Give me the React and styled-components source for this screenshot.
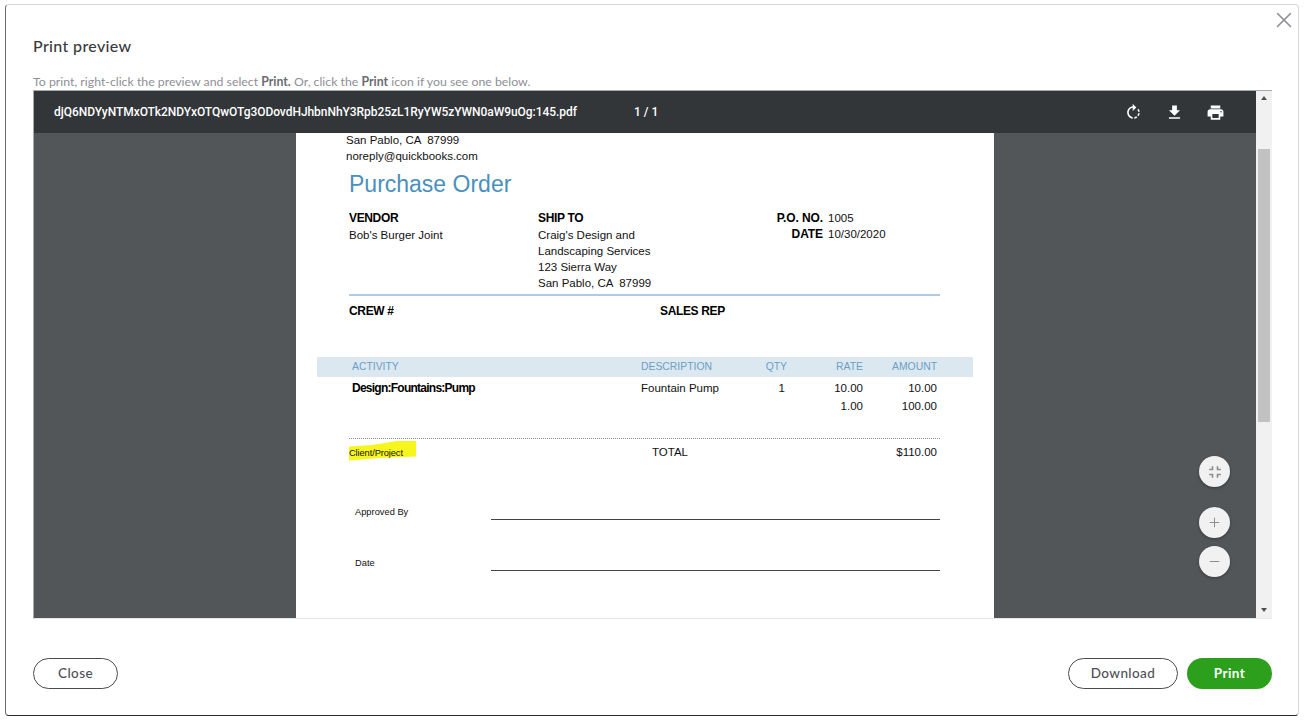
import React from 'react'
import styled, { createGlobalStyle } from 'styled-components'
import { X, Plus, Minus } from 'lucide-react'
import { MdRotateRight, MdFileDownload, MdPrint, MdFullscreenExit } from 'react-icons/md'

const GlobalStyle = createGlobalStyle`
  html, body {
    margin: 0;
    padding: 0;
    background: #fff;
  }
`

const Dialog = styled.div`
  position: relative;
  box-sizing: border-box;
  width: 1294px;
  height: 712px;
  margin: 4px 0 0 5px;
  padding: 0 26px 0 27px;
  display: flex;
  flex-direction: column;
  background: #fff;
  border: 1px solid #d4d7dc;
  border-left-color: #6b6c6e;
  border-bottom-color: #2b2c2e;
  border-radius: 4px;
  font-family: Lato, "Noto Sans", sans-serif;
`

const CloseIcon = styled.button`
  position: absolute;
  top: 2px;
  right: 1px;
  padding: 0;
  border: 0;
  background: none;
  color: #8d9096;
  display: flex;
`

const Title = styled.h1`
  margin: 30px 0 0;
  height: 21px;
  font-size: 16px;
  line-height: 21px;
  font-weight: 500;
  letter-spacing: 0.35px;
  color: #393a3d;
`

const Hint = styled.p`
  margin: 18px 0 0;
  height: 16px;
  font-size: 12.3px;
  line-height: 16px;
  color: #8d9096;
  b {
    font-weight: 700;
    color: #6b6c72;
  }
`

const Viewer = styled.div`
  box-sizing: border-box;
  height: 529px;
  display: grid;
  grid-template-columns: 1fr 16px;
  border-top: 1px solid #a8a9ab;
  border-bottom: 1px solid #e6e7e8;
  border-left: 1px solid #a8a9ab;
`

const ViewerMain = styled.div`
  min-width: 0;
  display: flex;
  flex-direction: column;
  background: #525659;
`

const Toolbar = styled.div`
  height: 42px;
  flex: none;
  display: flex;
  align-items: center;
  padding-left: 20px;
  background: #323639;
  color: #fff;
  font-family: Roboto, sans-serif;
  font-size: 12px;
  font-weight: 500;
`

const FileName = styled.span`
  width: 580px;
  letter-spacing: -0.05px;
`

const PageCount = styled.span`
  letter-spacing: 0;
`

const ToolIcons = styled.div`
  margin-left: auto;
  margin-right: 31px;
  display: flex;
  gap: 22px;
  font-size: 19px;
  svg {
    display: block;
  }
`

const Canvas = styled.div`
  position: relative;
  flex: 1;
  min-height: 0;
  overflow: hidden;
`

const Paper = styled.div`
  box-sizing: border-box;
  width: 698px;
  height: 100%;
  margin: 0 0 0 262px;
  padding-left: 53px;
  background: #fff;
  color: #111;
  font-family: "Liberation Sans", Arial, sans-serif;
  font-size: 11.5px;
  overflow: hidden;
`

const Sender = styled.div`
  margin: -1px 0 0 -3px;
  line-height: 16px;
  white-space: pre;
`

const DocTitle = styled.h2`
  margin: 5px 0 0;
  font-size: 23px;
  line-height: 30px;
  font-weight: 400;
  color: #4a90bd;
`

const Label = styled.div`
  font-size: 12px;
  font-weight: 700;
  letter-spacing: -0.35px;
  color: #000;
`

const InfoGrid = styled.div`
  box-sizing: border-box;
  width: 591px;
  margin-top: 11px;
  padding-bottom: 3px;
  display: grid;
  grid-template-columns: 189px 200px 1fr;
  line-height: 16px;
  white-space: pre;
  border-bottom: 2px solid #b0cbe1;
`

const InfoValue = styled.div`
  margin-top: 1px;
`

const MetaGrid = styled.div`
  display: grid;
  grid-template-columns: 85px auto;
  column-gap: 5px;
  justify-content: start;
  height: 32px;
  ${Label} {
    text-align: right;
    letter-spacing: -0.1px;
  }
`

const RepRow = styled.div`
  margin-top: 7px;
  height: 54px;
  display: grid;
  grid-template-columns: 311px 1fr;
  line-height: 16px;
`

const LineTable = styled.div`
  margin: 0 0 0 -32px;
  width: 656px;
`

const LineRow = styled.div`
  box-sizing: border-box;
  padding: 0 36px 0 35px;
  display: grid;
  grid-template-columns: 289px 110px 36px 76px 74px;
  height: ${p => (p.$head ? '20px' : '18px')};
  line-height: ${p => (p.$head ? '19px' : '18px')};
  font-size: ${p => (p.$head ? '10.4px' : '11.5px')};
  color: ${p => (p.$head ? '#6a9fc6' : '#111')};
  background: ${p => (p.$head ? '#dce8f0' : 'transparent')};
  margin-top: ${p => (p.$first ? '2px' : '0')};
`

const Num = styled.span`
  text-align: right;
  padding-right: ${p => p.$pad || 0}px;
`

const ActivityName = styled.span`
  font-size: 12px;
  font-weight: 700;
  letter-spacing: -0.75px;
  color: #000;
`

const TotalRow = styled.div`
  box-sizing: border-box;
  width: 591px;
  margin-top: 23px;
  height: 26px;
  padding-top: 1px;
  display: grid;
  grid-template-columns: 303px 1fr auto;
  align-items: center;
  border-top: 1px dotted #8e8f91;
  padding-right: 3px;
`

const Highlight = styled.span`
  box-sizing: border-box;
  width: 67px;
  height: 20px;
  margin-top: -3px;
  display: flex;
  align-items: flex-end;
  padding-bottom: 1px;
  font-size: 9.3px;
  line-height: 14px;
  letter-spacing: -0.1px;
  background: #f6f61c;
  clip-path: polygon(0 30%, 35% 22%, 75% 0, 100% 0, 100% 80%, 45% 88%, 0 100%);
`

const SignRow = styled.div`
  margin-top: ${p => p.$gap}px;
  width: 591px;
  height: 12px;
  display: grid;
  grid-template-columns: 142px 1fr;
  font-size: 9.3px;
`

const SignName = styled.span`
  padding-left: 6px;
  line-height: 9px;
`

const SignLine = styled.span`
  display: block;
  height: 11px;
  border-bottom: 1px solid #444;
`

const ZoomControls = styled.div`
  position: absolute;
  right: 26px;
  bottom: 41px;
  display: flex;
  flex-direction: column;
  gap: 8px;
`

const ZoomButton = styled.button`
  width: 31px;
  height: 31px;
  margin-bottom: ${p => (p.$apart ? '12px' : '0')};
  padding: 0;
  display: flex;
  align-items: center;
  justify-content: center;
  border: 0;
  border-radius: 50%;
  background: #f1f1f1;
  color: #8d8e90;
  box-shadow: 0 1px 3px rgba(0, 0, 0, 0.35);
`

const ScrollBar = styled.div`
  display: flex;
  flex-direction: column;
  align-items: center;
  background: #f1f1f1;
  padding-top: 5px;
`

const Arrow = styled.span`
  width: 0;
  height: 0;
  border-left: 3.5px solid transparent;
  border-right: 3.5px solid transparent;
  ${p => (p.$down
    ? 'border-top: 4px solid #505050; margin-top: auto; margin-bottom: 6px;'
    : 'border-bottom: 4px solid #505050;')}
`

const Thumb = styled.div`
  width: 12px;
  height: 273px;
  margin-top: 49px;
  background: #c1c1c1;
`

const Footer = styled.div`
  margin-top: 39px;
  display: flex;
  align-items: center;
  gap: 9px;
`

const PillButton = styled.button`
  box-sizing: border-box;
  width: ${p => p.$w}px;
  height: 31px;
  padding: 0 0 1px;
  border-radius: 16px;
  border: ${p => (p.$primary ? '0' : '1.5px solid #4a4b4f')};
  background: ${p => (p.$primary ? '#2ca01c' : '#fff')};
  color: ${p => (p.$primary ? '#fff' : '#4f5055')};
  font-family: Lato, "Noto Sans", sans-serif;
  font-size: 13.5px;
  font-weight: ${p => (p.$primary ? 700 : 500)};
  letter-spacing: 0.4px;
  margin-left: ${p => (p.$push ? 'auto' : '0')};
`

const App = () => {
  return (
    <>
      <GlobalStyle />
      <Dialog>
        <CloseIcon aria-label="Close"><X size={26} strokeWidth={1.5} /></CloseIcon>
        <Title>Print preview</Title>
        <Hint>To print, right-click the preview and select <b>Print.</b> Or, click the <b>Print</b> icon if you see one below.</Hint>
        <Viewer>
          <ViewerMain>
            <Toolbar>
              <FileName>djQ6NDYyNTMxOTk2NDYxOTQwOTg3ODovdHJhbnNhY3Rpb25zL1RyYW5zYWN0aW9uOg:145.pdf</FileName>
              <PageCount>1 / 1</PageCount>
              <ToolIcons>
                <MdRotateRight />
                <MdFileDownload />
                <MdPrint />
              </ToolIcons>
            </Toolbar>
            <Canvas>
              <Paper>
                <Sender>
                  <div>San Pablo, CA  87999</div>
                  <div>noreply@quickbooks.com</div>
                </Sender>
                <DocTitle>Purchase Order</DocTitle>
                <InfoGrid>
                  <div>
                    <Label>VENDOR</Label>
                    <InfoValue>Bob's Burger Joint</InfoValue>
                  </div>
                  <div>
                    <Label>SHIP TO</Label>
                    <InfoValue>Craig's Design and{'\n'}Landscaping Services{'\n'}123 Sierra Way{'\n'}San Pablo, CA  87999</InfoValue>
                  </div>
                  <MetaGrid>
                    <Label>P.O. NO.</Label>
                    <span>1005</span>
                    <Label>DATE</Label>
                    <span>10/30/2020</span>
                  </MetaGrid>
                </InfoGrid>
                <RepRow>
                  <Label>CREW #</Label>
                  <Label>SALES REP</Label>
                </RepRow>
                <LineTable>
                  <LineRow $head>
                    <span>ACTIVITY</span>
                    <span>DESCRIPTION</span>
                    <Num>QTY</Num>
                    <Num>RATE</Num>
                    <Num>AMOUNT</Num>
                  </LineRow>
                  <LineRow $first>
                    <ActivityName>Design:Fountains:Pump</ActivityName>
                    <span>Fountain Pump</span>
                    <Num $pad={2}>1</Num>
                    <Num>10.00</Num>
                    <Num>10.00</Num>
                  </LineRow>
                  <LineRow>
                    <span />
                    <span />
                    <span />
                    <Num>1.00</Num>
                    <Num>100.00</Num>
                  </LineRow>
                </LineTable>
                <TotalRow>
                  <Highlight>Client/Project</Highlight>
                  <span>TOTAL</span>
                  <span>$110.00</span>
                </TotalRow>
                <SignRow $gap={44}>
                  <SignName>Approved By</SignName>
                  <SignLine />
                </SignRow>
                <SignRow $gap={39}>
                  <SignName>Date</SignName>
                  <SignLine />
                </SignRow>
              </Paper>
              <ZoomControls>
                <ZoomButton $apart aria-label="Fit"><MdFullscreenExit size={20} /></ZoomButton>
                <ZoomButton aria-label="Zoom in"><Plus size={15} strokeWidth={1.6} /></ZoomButton>
                <ZoomButton aria-label="Zoom out"><Minus size={15} strokeWidth={1.6} /></ZoomButton>
              </ZoomControls>
            </Canvas>
          </ViewerMain>
          <ScrollBar>
            <Arrow />
            <Thumb />
            <Arrow $down />
          </ScrollBar>
        </Viewer>
        <Footer>
          <PillButton $w={85}>Close</PillButton>
          <PillButton $w={110} $push>Download</PillButton>
          <PillButton $w={85} $primary>Print</PillButton>
        </Footer>
      </Dialog>
    </>
  )
}

export default App
